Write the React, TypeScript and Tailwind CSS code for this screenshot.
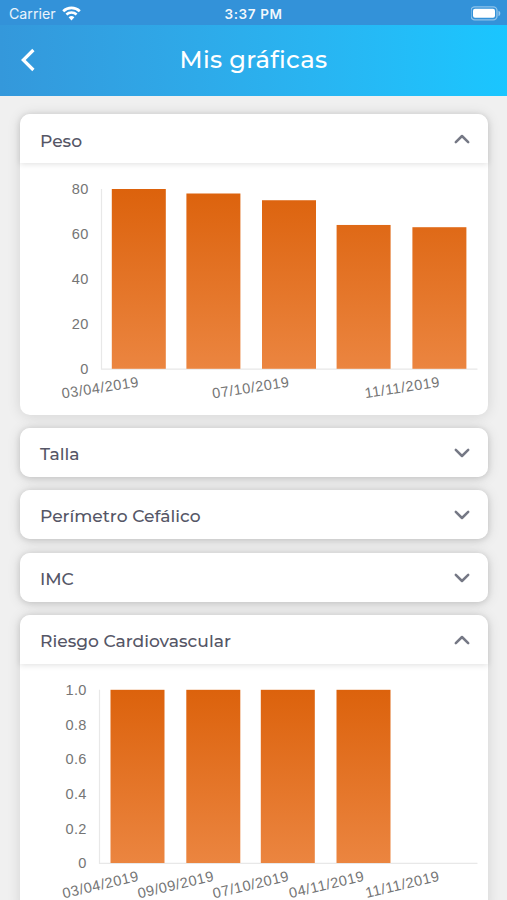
import { useId, useState } from "react";
import { clsx } from "clsx";

type Bar = { date: string; value: number };

type ChartData = {
  bars: Bar[];
  max: number;
  ticks: string[];
  // every nth date gets a label
  labelEvery: number;
  labelAngle: number;
  axisX: number;
  barXs: number[];
  plotTop: number;
  plotBottom: number;
  labelY: number;
  height: number;
};

type Section = {
  title: string;
  open: boolean;
  chart?: ChartData;
};

const sections: Section[] = [
  {
    title: "Peso",
    open: true,
    chart: {
      bars: [
        { date: "03/04/2019", value: 80 },
        { date: "09/09/2019", value: 78 },
        { date: "07/10/2019", value: 75 },
        { date: "04/11/2019", value: 64 },
        { date: "11/11/2019", value: 63 },
      ],
      max: 80,
      ticks: ["80", "60", "40", "20", "0"],
      labelEvery: 2,
      labelAngle: -8.8,
      axisX: 81.5,
      barXs: [91.8, 166.4, 242, 316.6, 392.4],
      plotTop: 26,
      plotBottom: 205.8,
      labelY: 223.6,
      height: 251.3,
    },
  },
  { title: "Talla", open: false },
  { title: "Perímetro Cefálico", open: false },
  { title: "IMC", open: false },
  {
    title: "Riesgo Cardiovascular",
    open: true,
    chart: {
      bars: [
        { date: "03/04/2019", value: 1 },
        { date: "09/09/2019", value: 1 },
        { date: "07/10/2019", value: 1 },
        { date: "04/11/2019", value: 1 },
        { date: "11/11/2019", value: 0 },
      ],
      max: 1,
      ticks: ["1.0", "0.8", "0.6", "0.4", "0.2", "0"],
      labelEvery: 1,
      labelAngle: -13.3,
      axisX: 79.5,
      barXs: [90.5, 166.3, 240.8, 316.5, 392],
      plotTop: 25.8,
      plotBottom: 199,
      labelY: 216.6,
      height: 251.3,
    },
  },
];

function BarChart({ data }: { data: ChartData }) {
  const id = useId();
  const { plotTop, plotBottom, axisX } = data;
  const plotHeight = plotBottom - plotTop;

  return (
    <svg
      width="468"
      height={data.height}
      viewBox={`0 0 468 ${data.height}`}
      className="block font-['Liberation_Sans',Arial,sans-serif] text-[14.6px]"
    >
      <defs>
        <linearGradient
          id={id}
          gradientUnits="userSpaceOnUse"
          x1="0"
          y1={plotTop}
          x2="0"
          y2={plotBottom}
        >
          <stop offset="0" stopColor="#dc620c" />
          <stop offset="1" stopColor="#eb8540" />
        </linearGradient>
      </defs>
      <path
        d={`M${axisX} ${plotTop}V${plotBottom + 0.3}H457.5`}
        fill="none"
        stroke="#e8e8e8"
        strokeWidth="1.2"
      />
      {data.ticks.map((tick, i) => (
        <text
          key={tick}
          x={axisX - 12.8}
          y={plotTop + (plotHeight * i) / (data.ticks.length - 1) + 5.2}
          textAnchor="end"
          letterSpacing="0.3"
          fill="#757575"
        >
          {tick}
        </text>
      ))}
      {data.bars.map((bar, i) => {
        const h = (bar.value / data.max) * plotHeight;
        return (
          <rect
            key={bar.date}
            x={data.barXs[i]}
            y={plotBottom - h}
            width="54"
            height={h}
            fill={`url(#${id})`}
          />
        );
      })}
      {data.bars.map((bar, i) =>
        i % data.labelEvery === 0 ? (
          <text
            key={bar.date}
            transform={`translate(${119.6 + i * 75.2} ${data.labelY}) rotate(${data.labelAngle})`}
            textAnchor="end"
            letterSpacing="0.5"
            fill="#757575"
          >
            {bar.date}
          </text>
        ) : null
      )}
    </svg>
  );
}

function Chevron({ up }: { up: boolean }) {
  return (
    <svg width="16" height="10" viewBox="0 0 16 10" className="mt-px" fill="none">
      <path
        d={up ? "M1.8 8.2 8 2l6.2 6.2" : "M1.8 1.8 8 8l6.2-6.2"}
        stroke="#757885"
        strokeWidth="2.5"
        strokeLinecap="round"
        strokeLinejoin="round"
      />
    </svg>
  );
}

function Panel({ section }: { section: Section }) {
  const [open, setOpen] = useState(section.open);

  return (
    <section className="shrink-0 rounded-[10px] bg-white shadow-[0_1px_14px_rgba(0,0,0,0.12)]">
      <button
        type="button"
        onClick={() => setOpen(!open)}
        className={clsx(
          "flex h-[49px] w-full items-center justify-between bg-white pr-[18px] pl-5 shadow-[0_1px_6px_rgba(0,0,0,0.13)]",
          open ? "rounded-t-[10px]" : "rounded-[10px]"
        )}
      >
        <span className="mt-[3px] font-['Montserrat',Inter,sans-serif] text-[17.1px] font-medium text-[#555666]">
          {section.title}
        </span>
        <Chevron up={open} />
      </button>
      {open && section.chart && <BarChart data={section.chart} />}
    </section>
  );
}

function StatusBar() {
  return (
    <div className="grid h-[25px] shrink-0 grid-cols-3 items-center bg-[#3392d9] px-[9px] pt-0.5 font-[Inter,sans-serif] text-white">
      <div className="flex items-center gap-1.5 text-[14.2px] text-white/90">
        Carrier
        <svg width="19" height="15" viewBox="0 0 19 15" fill="none">
          <path d="M1.2 5.2a12 12 0 0 1 16.6 0" stroke="#fff" strokeWidth="2.7" />
          <path d="M4.4 8.5a7.4 7.4 0 0 1 10.2 0" stroke="#fff" strokeWidth="2.5" />
          <path d="M9.5 14.4 6.6 11.3a4.2 4.2 0 0 1 5.8 0z" fill="#fff" />
        </svg>
      </div>
      <div className="pt-px text-center text-[13.5px] font-semibold tracking-[0.6px] text-white/95">
        3:37 PM
      </div>
      <div className="-mr-[5px] flex justify-end">
        <svg width="32" height="15" viewBox="0 0 32 15">
          <rect
            x="0"
            y="0.8"
            width="26"
            height="13"
            rx="3.8"
            fill="none"
            stroke="#fff"
            strokeOpacity="0.45"
            strokeWidth="1.3"
          />
          <rect x="2" y="2.8" width="22" height="9" rx="2" fill="#fff" />
          <path d="M27.5 4.8c2.4.8 2.4 4.6 0 5.4z" fill="#fff" fillOpacity="0.5" />
        </svg>
      </div>
    </div>
  );
}

function Header() {
  return (
    <header className="grid h-[71px] shrink-0 grid-cols-[60px_1fr_60px] items-center bg-linear-to-r from-[#3498db] to-[#1ac6ff]">
      <button type="button" aria-label="Volver" className="-mt-0.5 pl-5">
        <svg width="15" height="24" viewBox="0 0 15 24" fill="none">
          <path d="M13.4 2 3.3 12l10.1 10" stroke="#fff" strokeWidth="3.2" />
        </svg>
      </button>
      <h1 className="text-center font-['Montserrat',Inter,sans-serif] text-[24.2px] font-medium tracking-[0.3px] text-white">
        Mis gráficas
      </h1>
    </header>
  );
}

export default function App() {
  return (
    <div className="flex h-[900px] w-[507px] flex-col overflow-hidden bg-[#f0f0f0]">
      <StatusBar />
      <Header />
      <main className="flex min-h-0 flex-1 flex-col gap-[13.3px] pt-[18.4px] pr-[19px] pl-5">
        {sections.map((section) => (
          <Panel key={section.title} section={section} />
        ))}
      </main>
    </div>
  );
}
